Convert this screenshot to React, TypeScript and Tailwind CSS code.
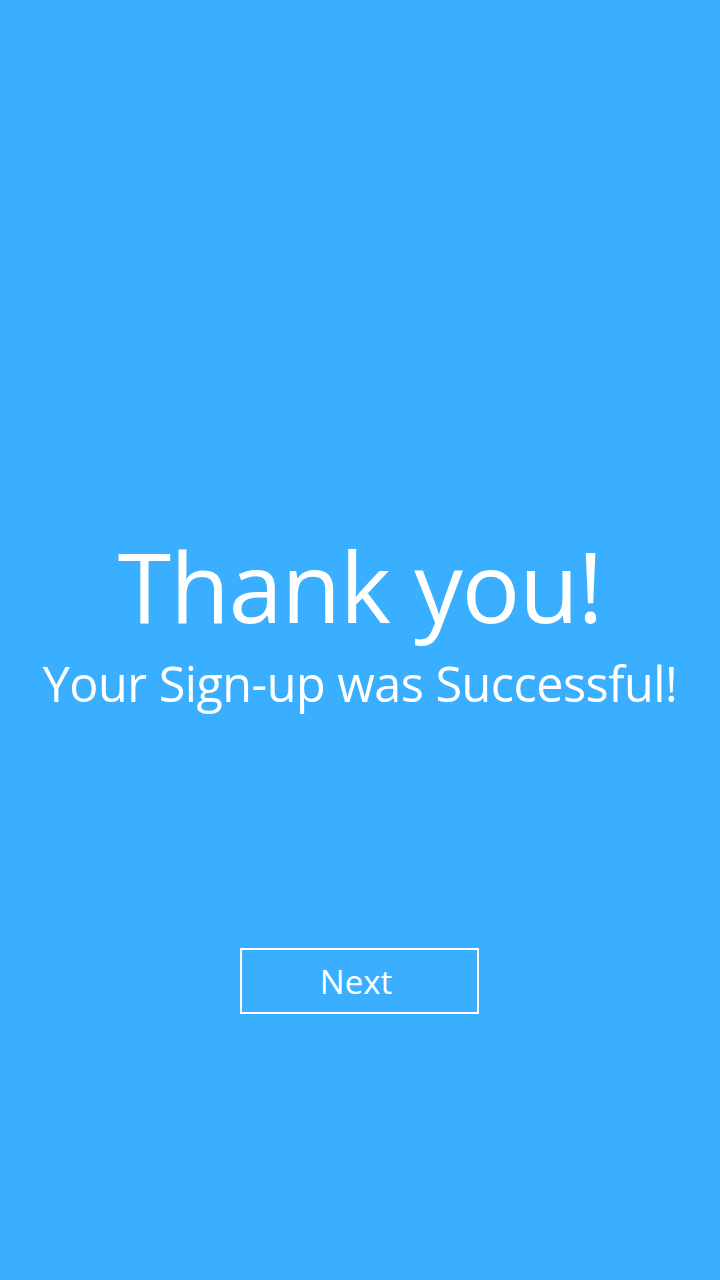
export default function App() {
  return (
    <div className="w-[720px] h-[1280px] bg-[#3aafff] flex flex-col items-center text-white font-['Open_Sans',sans-serif]">
      <h1 className="mt-[530px] text-[97px] leading-[110px] font-normal tracking-[-1px]">Thank you!</h1>
      <p className="mt-[13px] text-[48.5px] leading-[60px] tracking-[-0.5px]">Your Sign-up was Successful!</p>
      <button className="mt-[235px] mr-[2px] w-[239px] h-[66px] border-2 border-white text-[33px] leading-none pr-[6px]">
        Next
      </button>
    </div>
  )
}
